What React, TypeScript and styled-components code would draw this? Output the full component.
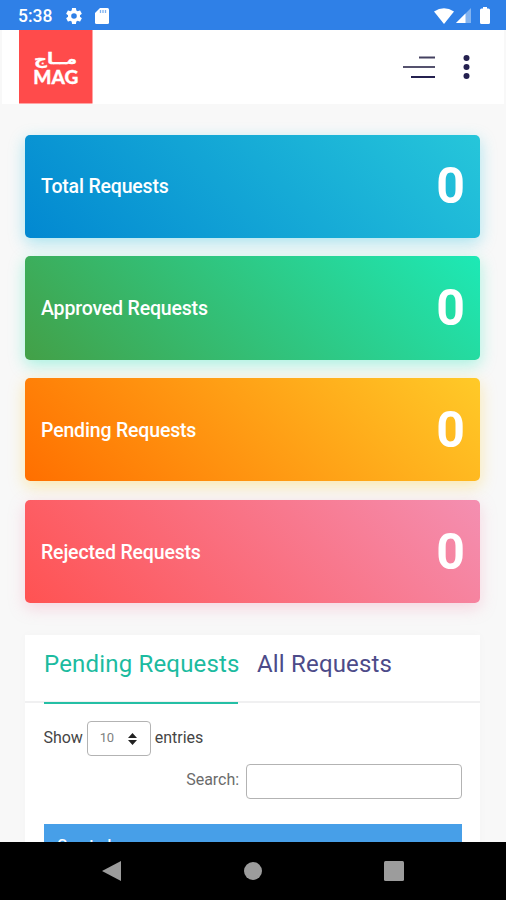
import React from "react";
import styled, { createGlobalStyle } from "styled-components";

const GlobalStyle = createGlobalStyle`
  * { box-sizing: border-box; }
  body { margin: 0; background: #f8f8f8; font-family: Roboto, "Liberation Sans", sans-serif; }
`;

const Screen = styled.div`
  width: 506px;
  height: 900px;
  display: flex;
  flex-direction: column;
  overflow: hidden;
  background: #f8f8f8;
`;

const StatusBar = styled.header`
  height: 30px;
  flex: none;
  display: flex;
  align-items: center;
  justify-content: space-between;
  padding: 1px 16px 0 18px;
  background: #2f80e7;
  color: #fff;
`;

const StatusGroup = styled.div<{ $gap: number }>`
  display: flex;
  align-items: center;
  gap: ${(p) => p.$gap}px;
  svg { display: block; fill: #fff; }
`;

const Clock = styled.span`
  width: 34px;
  margin-right: 14px;
  font-size: 17.5px;
  font-weight: 500;
  line-height: 28px;
  white-space: nowrap;
`;

const Navbar = styled.nav`
  height: 74px;
  flex: none;
  display: flex;
  justify-content: space-between;
  margin: 0 2px;
  padding: 0 34px 0 17px;
  background: #fff;
`;

const Logo = styled.svg`
  display: block;
  width: 74px;
  height: 74px;
`;

const NavActions = styled.div`
  display: flex;
  align-items: center;
  gap: 27px;
  svg { display: block; }
`;

const Content = styled.main`
  height: 738px;
  flex: none;
  overflow: hidden;
  padding: 30.6px 26px 0 25px;
`;

const Stats = styled.section`
  display: flex;
  flex-direction: column;
  gap: 18.6px;
`;

const StatCard = styled.article<{ $from: string; $to: string; $glow: string }>`
  height: 103.2px;
  display: flex;
  align-items: center;
  justify-content: space-between;
  padding: 0 16px;
  border-radius: 5px;
  color: #fff;
  background: linear-gradient(45deg, ${(p) => p.$from}, ${(p) => p.$to});
  box-shadow: 0 5px 16px ${(p) => p.$glow};
`;

const StatLabel = styled.span`
  font-size: 19.5px;
  font-weight: 500;
  letter-spacing: -0.17px;
  padding-top: 1px;
`;

const StatValue = styled.span`
  font-size: 50px;
  font-weight: 700;
  line-height: 60px;
  margin-right: -1px;
`;

const Panel = styled.section`
  margin-top: 31.7px;
  background: #fff;
  box-shadow: 0 0 10px rgba(0, 0, 0, 0.025);
`;

const Tabs = styled.div`
  height: 68px;
  display: flex;
  gap: 19px;
  padding: 0 19px;
  border-bottom: 2px solid #f0f0f1;
`;

const Tab = styled.button<{ $active?: boolean; $width: number }>`
  width: ${(p) => p.$width}px;
  height: 69px;
  padding: 0 0 8px;
  border: 0;
  border-bottom: 2px solid ${(p) => (p.$active ? "#24bfa5" : "transparent")};
  background: none;
  color: ${(p) => (p.$active ? "#1cbba0" : "#4d4b89")};
  font: 400 24px/59px Roboto, sans-serif;
  letter-spacing: 0.18px;
  text-align: left;
  white-space: nowrap;
`;

const TableArea = styled.div`
  padding: 18.3px 18px 0 18.5px;
  font-size: 16px;
`;

const LengthRow = styled.label`
  height: 35px;
  display: flex;
  align-items: center;
  gap: 4px;
  color: #454545;
`;

const RowText = styled.span`
  padding-bottom: 3px;
  letter-spacing: -0.04px;
`;

const LengthSelect = styled.span`
  width: 64px;
  height: 35px;
  display: flex;
  align-items: center;
  justify-content: space-between;
  padding: 0 13px 2px 12px;
  border: 1.5px solid #b3b3b3;
  border-radius: 4px;
  color: #808080;
  font-size: 13px;
  letter-spacing: -0.3px;
  svg { display: block; position: relative; top: 1px; }
`;

const SearchRow = styled.label`
  display: flex;
  align-items: center;
  justify-content: flex-end;
  gap: 7px;
  margin-top: 7.5px;
  color: #6b6b6b;
`;

const SearchInput = styled.input`
  width: 216px;
  height: 35px;
  border: 1.5px solid #b3b3b3;
  border-radius: 4px;
  background: #fff;
`;

const TableHead = styled.div`
  height: 50px;
  margin: 25px 0 0 0.5px;
  padding: 12px 13px;
  background: #479fe8;
  color: #fff;
  font-size: 15.5px;
  font-weight: 500;
`;

const SystemNav = styled.footer`
  height: 58px;
  flex: none;
  display: flex;
  align-items: center;
  justify-content: space-between;
  padding: 0 102px;
  background: #000;
  svg { display: block; fill: #9c9c9c; }
`;

const stats = [
  { label: "Total Requests", value: 0, from: "#0288d1", to: "#26c6da", glow: "rgba(30, 195, 225, 0.36)" },
  { label: "Approved Requests", value: 0, from: "#43a047", to: "#1de9b6", glow: "rgba(29, 233, 182, 0.36)" },
  { label: "Pending Requests", value: 0, from: "#ff6f00", to: "#ffca28", glow: "rgba(255, 202, 40, 0.36)" },
  { label: "Rejected Requests", value: 0, from: "#ff5252", to: "#f48fb1", glow: "rgba(244, 143, 177, 0.34)" },
];

const GearIcon = () => (
  <svg width="16" height="16" viewBox="2 2 20 20">
    <path d="M19.43 12.98c.04-.32.07-.64.07-.98s-.03-.66-.07-.98l2.11-1.65c.19-.15.24-.42.12-.64l-2-3.46c-.12-.22-.39-.3-.61-.22l-2.49 1c-.52-.4-1.08-.73-1.69-.98l-.38-2.65A.49.49 0 0 0 14 2h-4c-.25 0-.46.18-.49.42l-.38 2.65c-.61.25-1.17.59-1.69.98l-2.49-1c-.23-.09-.49 0-.61.22l-2 3.46c-.13.22-.07.49.12.64l2.11 1.65c-.04.32-.07.65-.07.98s.03.66.07.98l-2.11 1.65c-.19.15-.24.42-.12.64l2 3.46c.12.22.39.3.61.22l2.49-1c.52.4 1.08.73 1.69.98l.38 2.65c.03.24.24.42.49.42h4c.25 0 .46-.18.49-.42l.38-2.65c.61-.25 1.17-.59 1.69-.98l2.49 1c.23.09.49 0 .61-.22l2-3.46c.12-.22.07-.49-.12-.64l-2.11-1.65zM12 15.5A3.5 3.5 0 1 1 12 8.500a3.500 3.500 0 0 1 0 7z" />
  </svg>
);

const SdCardIcon = () => (
  <svg width="14" height="16" viewBox="0 0 14 16">
    <path d="M5 0h7.500Q14 0 14 1.500v13q0 1.500-1.500 1.500h-11Q0 16 0 14.500V5z" />
    <path d="M5.500 2v3M8 2v3M10.500 2v3" stroke="#7fb2f0" strokeWidth="1.300" />
  </svg>
);

const WifiIcon = () => (
  <svg width="20" height="16" viewBox="0 0 20 16">
    <path d="M0 3.500Q10-3 20 3.500L10 16z" />
  </svg>
);

const SignalIcon = () => (
  <svg width="15" height="15" viewBox="0 0 15 15">
    <path d="M15 0v15H0z" opacity=".4" />
    <path d="M9.500 5.500V15H0z" />
  </svg>
);

const BatteryIcon = () => (
  <svg width="10" height="17" viewBox="0 0 10 17">
    <path d="M3 0h4v1.500h1.500Q10 1.500 10 3v12.500q0 1.500-1.500 1.500h-7Q0 17 0 15.500V3q0-1.500 1.500-1.500H3z" />
  </svg>
);

const BrandLogo = () => (
  <Logo viewBox="0 0 74 74" role="img" aria-label="MAG">
    <rect width="73.500" height="73.500" fill="#ff4b4b" />
    <g fill="#fff" stroke="#fff" strokeWidth=".3">
      <text x="15" y="33.500" fontFamily="DejaVu Sans, sans-serif" fontWeight="700" fontSize="15.500" textLength="43" lengthAdjust="spacingAndGlyphs">مــاج</text>
      <text x="14.300" y="53.700" fontFamily="Lato, sans-serif" fontWeight="900" fontSize="18.500" textLength="45" lengthAdjust="spacingAndGlyphs">MAG</text>
    </g>
  </Logo>
);

export default function App() {
  return (
    <Screen>
      <GlobalStyle />
      <StatusBar>
        <StatusGroup $gap={0}>
          <Clock>5:38</Clock>
          <StatusGroup $gap={13}>
            <GearIcon />
            <SdCardIcon />
          </StatusGroup>
        </StatusGroup>
        <StatusGroup $gap={9}>
          <StatusGroup $gap={2}>
            <WifiIcon />
            <SignalIcon />
          </StatusGroup>
          <BatteryIcon />
        </StatusGroup>
      </StatusBar>
      <Navbar>
        <BrandLogo />
        <NavActions>
          <svg width="32" height="24" viewBox="0 0 32 24" stroke="#24204f" strokeWidth="2">
            <path d="M16 2.500H32" stroke="#444160" />
            <path d="M0 12H32" stroke="#55526e" />
            <path d="M8 22H32" />
          </svg>
          <svg width="8" height="26" viewBox="0 0 8 26" fill="#24204f">
            <circle cx="4.500" cy="4" r="3" />
            <circle cx="4.500" cy="13" r="3" />
            <circle cx="4.500" cy="22" r="3" />
          </svg>
        </NavActions>
      </Navbar>
      <Content>
        <Stats>
          {stats.map((s) => (
            <StatCard key={s.label} $from={s.from} $to={s.to} $glow={s.glow}>
              <StatLabel>{s.label}</StatLabel>
              <StatValue>{s.value}</StatValue>
            </StatCard>
          ))}
        </Stats>
        <Panel>
          <Tabs>
            <Tab $active $width={194}>Pending Requests</Tab>
            <Tab $width={134}>All Requests</Tab>
          </Tabs>
          <TableArea>
            <LengthRow>
              <RowText>Show</RowText>
              <LengthSelect>
                10
                <svg width="9" height="12" viewBox="0 0 9 12">
                  <path d="M0 5 4.500 0 9 5zM0 7h9l-4.500 5z" fill="#222" />
                </svg>
              </LengthSelect>
              <RowText>entries</RowText>
            </LengthRow>
            <SearchRow>
              <RowText>Search:</RowText>
              <SearchInput />
            </SearchRow>
            <TableHead>Created</TableHead>
          </TableArea>
        </Panel>
      </Content>
      <SystemNav>
        <svg width="19" height="20" viewBox="0 0 19 20"><path d="M0 10 19 0v20z" /></svg>
        <svg width="18" height="18" viewBox="0 0 18 18"><circle cx="9" cy="9" r="9" /></svg>
        <svg width="20" height="20" viewBox="0 0 20 20"><rect width="20" height="20" rx="1.500" /></svg>
      </SystemNav>
    </Screen>
  );
}
